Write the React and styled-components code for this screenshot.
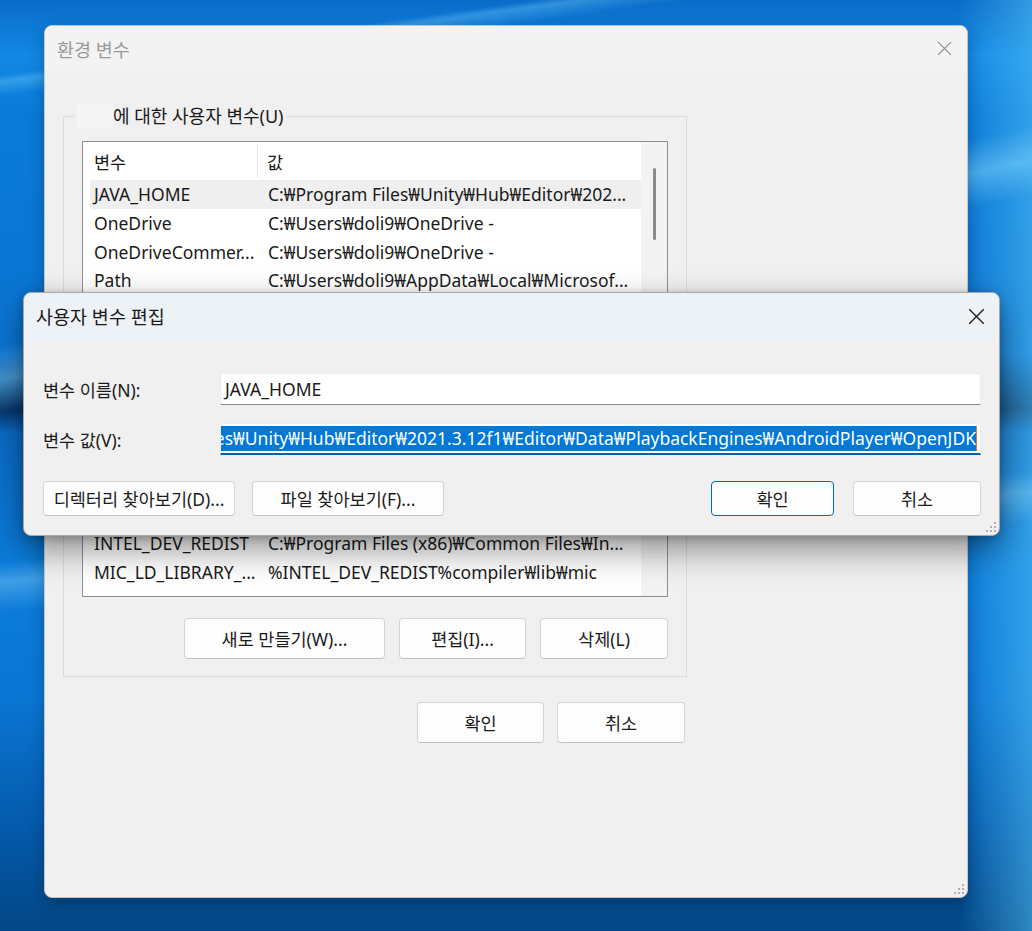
import React from 'react';
import styled, { createGlobalStyle } from 'styled-components';

const GlobalStyle = createGlobalStyle`
  html, body {
    margin: 0;
    padding: 0;
  }
  body {
    font-family: "Noto Sans", "Noto Sans CJK KR", sans-serif;
    color: #1a1a1a;
  }
`;

const Desktop = styled.div`
  position: relative;
  width: 1032px;
  height: 931px;
  overflow: hidden;
  background:
    linear-gradient(172deg, transparent 0%, transparent 7%, rgba(120, 210, 255, 0.35) 7.6%, transparent 9%, transparent 100%),
    linear-gradient(168deg, transparent 30%, rgba(140, 220, 255, 0.45) 33%, transparent 36%),
    linear-gradient(175deg, transparent 55%, rgba(160, 225, 255, 0.35) 57%, transparent 60%),
    linear-gradient(90deg, rgba(0, 0, 0, 0) 0%, rgba(0, 0, 0, 0) 93%, rgba(90, 200, 250, 0.5) 100%),
    linear-gradient(180deg,
      #0a6cc8 0%,
      #1288e4 6%,
      #0a7ad8 12%,
      #0a74d2 38%,
      #063f7a 42.5%,
      #053468 44%,
      #0a6ac4 46.5%,
      #0b7cda 60%,
      #0a76d4 75%,
      #0458a8 90%,
      #034786 100%);
`;

const Window = styled.div`
  position: absolute;
  left: ${p => p.$x}px;
  top: ${p => p.$y}px;
  width: ${p => p.$w}px;
  height: ${p => p.$h}px;
  box-sizing: border-box;
  display: flex;
  flex-direction: column;
  background: #f0f0f0;
  border-radius: 8px;
  border: 1px solid ${p => (p.$active ? '#a8a8a8' : '#c4c4c4')};
  box-shadow: ${p => (p.$active
    ? '0 14px 34px rgba(0, 0, 0, 0.42), 0 2px 8px rgba(0, 0, 0, 0.2)'
    : '0 6px 16px rgba(0, 0, 0, 0.25)')};
  overflow: hidden;
  font-size: 17.5px;
`;

const TitleBar = styled.div`
  flex: none;
  height: ${p => p.$h}px;
  display: flex;
  align-items: center;
  justify-content: space-between;
  padding-left: 12px;
  background: ${p => (p.$active ? '#ecf2f6' : '#f3f3f3')};
  color: ${p => (p.$active ? '#1a1a1a' : '#9a9a9a')};
  font-size: 18.5px;
`;

const CloseButton = styled.div`
  width: 46px;
  height: 100%;
  display: flex;
  align-items: center;
  justify-content: center;
  color: ${p => (p.$active ? '#1a1a1a' : '#8a8a8a')};
`;

const Grip = styled.svg`
  position: absolute;
  right: 3px;
  bottom: 3px;
`;

const Body = styled.div`
  flex: 1;
  display: flex;
  flex-direction: column;
  padding: ${p => p.$pad};
`;

const Column = styled.div`
  width: 624px;
  display: flex;
  flex-direction: column;
`;

const GroupBox = styled.fieldset`
  margin: 33px 0 0;
  padding: 13px 18px 17px;
  border: 1px solid #dcdcdc;
  min-inline-size: 0;
  display: flex;
  flex-direction: column;
`;

const Legend = styled.legend`
  margin-left: -7px;
  padding: 0 3px 0 2px;
  line-height: 24px;
  font-size: 18px;
  display: flex;
  align-items: center;
`;

const Redacted = styled.span`
  display: inline-block;
  width: 36px;
  height: 24px;
  background: #f5f5f5;
`;

const List = styled.div`
  height: 456px;
  box-sizing: border-box;
  border: 1px solid #8c8f96;
  background: #fff;
  display: flex;
`;

const ListMain = styled.div`
  flex: 1;
  display: flex;
  flex-direction: column;
  overflow: hidden;
  padding-bottom: 10px;
`;

const Header = styled.div`
  flex: none;
  height: 38px;
  display: grid;
  grid-template-columns: 175px 1fr;
  align-items: center;
`;

const HeaderCell = styled.div`
  height: 34px;
  display: flex;
  align-items: center;
  padding-left: ${p => (p.$first ? 11 : 9)}px;
  border-right: ${p => (p.$first ? '1px solid #e5e5e5' : 'none')};
`;

const RowGroup = styled.div`
  display: flex;
  flex-direction: column;
  padding-left: 7px;
  margin-top: ${p => (p.$bottom ? 'auto' : '0')};
`;

const Row = styled.div`
  flex: none;
  height: 28.67px;
  display: grid;
  grid-template-columns: 168px 1fr;
  align-items: center;
  background: ${p => (p.$selected ? '#efefef' : 'transparent')};
  white-space: nowrap;
`;

const Cell = styled.div`
  padding-left: ${p => (p.$value ? 10 : 4)}px;
  overflow: hidden;
  text-overflow: ellipsis;
`;

const ScrollTrack = styled.div`
  flex: none;
  width: 26px;
  background: #f3f3f3;
  display: flex;
  justify-content: center;
  padding-top: 26px;
  box-sizing: border-box;
`;

const ScrollThumb = styled.div`
  width: 3px;
  height: 72px;
  border-radius: 2px;
  background: #8a8a8a;
`;

const ButtonRow = styled.div`
  display: flex;
  justify-content: ${p => p.$justify || 'flex-end'};
  gap: ${p => p.$gap}px;
  margin-top: ${p => p.$mt}px;
  margin-right: ${p => p.$mr || 0}px;
`;

const Button = styled.div`
  width: ${p => p.$w}px;
  height: ${p => p.$h}px;
  box-sizing: border-box;
  display: flex;
  align-items: center;
  justify-content: center;
  background: #fdfdfd;
  border: 1px solid ${p => (p.$default ? '#0067c0' : '#d4d4d4')};
  border-bottom-color: ${p => (p.$default ? '#0067c0' : '#c2c2c2')};
  border-radius: 4px;
  color: #1b1b1b;
  white-space: nowrap;
`;

const Form = styled.div`
  display: grid;
  grid-template-columns: 177px 1fr;
  row-gap: 18px;
  align-items: center;
`;

const Input = styled.div`
  height: 32px;
  box-sizing: border-box;
  background: #fff;
  border: 1px solid #ececec;
  border-bottom: ${p => (p.$focused ? '2px solid #0062b8' : '1px solid #8a8a8a')};
  border-radius: 3px 3px 0 0;
  display: flex;
  align-items: center;
  justify-content: ${p => (p.$focused ? 'flex-end' : 'flex-start')};
  padding: 0 3px 0 4px;
  overflow: hidden;
  white-space: nowrap;
`;

const Selection = styled.span`
  flex: none;
  background: #0078d7;
  color: #fff;
  line-height: 25px;
  border-right: 1px solid #e0782a;
`;

const Group = styled.div`
  display: flex;
  gap: ${p => p.$gap}px;
`;

const CloseIcon = ({ size }) => (
  <svg width={size} height={size} viewBox="0 0 14 14">
    <path d="M1 1 L13 13 M13 1 L1 13" stroke="currentColor" strokeWidth="1.1" fill="none" />
  </svg>
);

const GripIcon = () => (
  <Grip width="11" height="11" viewBox="0 0 11 11">
    {[[8, 0], [8, 4], [4, 4], [8, 8], [4, 8], [0, 8]].map(([x, y]) => (
      <rect key={`${x}-${y}`} x={x + 1} y={y + 1} width="2" height="2" fill="#b0b0b0" />
    ))}
  </Grip>
);

const topRows = [
  ['JAVA_HOME', 'C:₩Program Files₩Unity₩Hub₩Editor₩202...', true],
  ['OneDrive', 'C:₩Users₩doli9₩OneDrive - '],
  ['OneDriveCommer...', 'C:₩Users₩doli9₩OneDrive - '],
  ['Path', 'C:₩Users₩doli9₩AppData₩Local₩Microsof...'],
];

const bottomRows = [
  ['INTEL_DEV_REDIST', 'C:₩Program Files (x86)₩Common Files₩In...'],
  ['MIC_LD_LIBRARY_...', '%INTEL_DEV_REDIST%compiler₩lib₩mic'],
];

const renderRow = ([name, value, selected]) => (
  <Row key={name} $selected={selected}>
    <Cell>{name}</Cell>
    <Cell $value>{value}</Cell>
  </Row>
);

const EnvWindow = () => (
  <Window $x={44} $y={25} $w={924} $h={873}>
    <TitleBar $h={45}>
      <span>환경 변수</span>
      <CloseButton><CloseIcon size={15} /></CloseButton>
    </TitleBar>
    <Body $pad="0 0 0 18px">
      <Column>
        <GroupBox>
          <Legend><Redacted />에 대한 사용자 변수(U)</Legend>
          <List>
            <ListMain>
              <Header>
                <HeaderCell $first>변수</HeaderCell>
                <HeaderCell>값</HeaderCell>
              </Header>
              <RowGroup>{topRows.map(renderRow)}</RowGroup>
              <RowGroup $bottom>{bottomRows.map(renderRow)}</RowGroup>
            </ListMain>
            <ScrollTrack><ScrollThumb /></ScrollTrack>
          </List>
          <ButtonRow $gap={14} $mt={21}>
            <Button $w={201} $h={41}>새로 만들기(W)...</Button>
            <Button $w={127} $h={41}>편집(I)...</Button>
            <Button $w={128} $h={41}>삭제(L)</Button>
          </ButtonRow>
        </GroupBox>
        <ButtonRow $gap={13} $mt={25} $mr={2}>
          <Button $w={127} $h={41}>확인</Button>
          <Button $w={128} $h={41}>취소</Button>
        </ButtonRow>
      </Column>
    </Body>
    <GripIcon />
  </Window>
);

const EditWindow = () => (
  <Window $active $x={23} $y={292} $w={977} $h={244}>
    <TitleBar $active $h={46}>
      <span>사용자 변수 편집</span>
      <CloseButton $active><CloseIcon size={17} /></CloseButton>
    </TitleBar>
    <Body $pad="34px 18px 0 19px">
      <Form>
        <span>변수 이름(N):</span>
        <Input>JAVA_HOME</Input>
        <span>변수 값(V):</span>
        <Input $focused>
          <Selection>C:₩Program Files₩Unity₩Hub₩Editor₩2021.3.12f1₩Editor₩Data₩PlaybackEngines₩AndroidPlayer₩OpenJDK</Selection>
        </Input>
      </Form>
      <ButtonRow $justify="space-between" $gap={0} $mt={26}>
        <Group $gap={17}>
          <Button $w={192} $h={35}>디렉터리 찾아보기(D)...</Button>
          <Button $w={192} $h={35}>파일 찾아보기(F)...</Button>
        </Group>
        <Group $gap={19}>
          <Button $default $w={123} $h={35}>확인</Button>
          <Button $w={128} $h={35}>취소</Button>
        </Group>
      </ButtonRow>
    </Body>
    <GripIcon />
  </Window>
);

const App = () => (
  <>
    <GlobalStyle />
    <Desktop>
      <EnvWindow />
      <EditWindow />
    </Desktop>
  </>
);

export default App;
